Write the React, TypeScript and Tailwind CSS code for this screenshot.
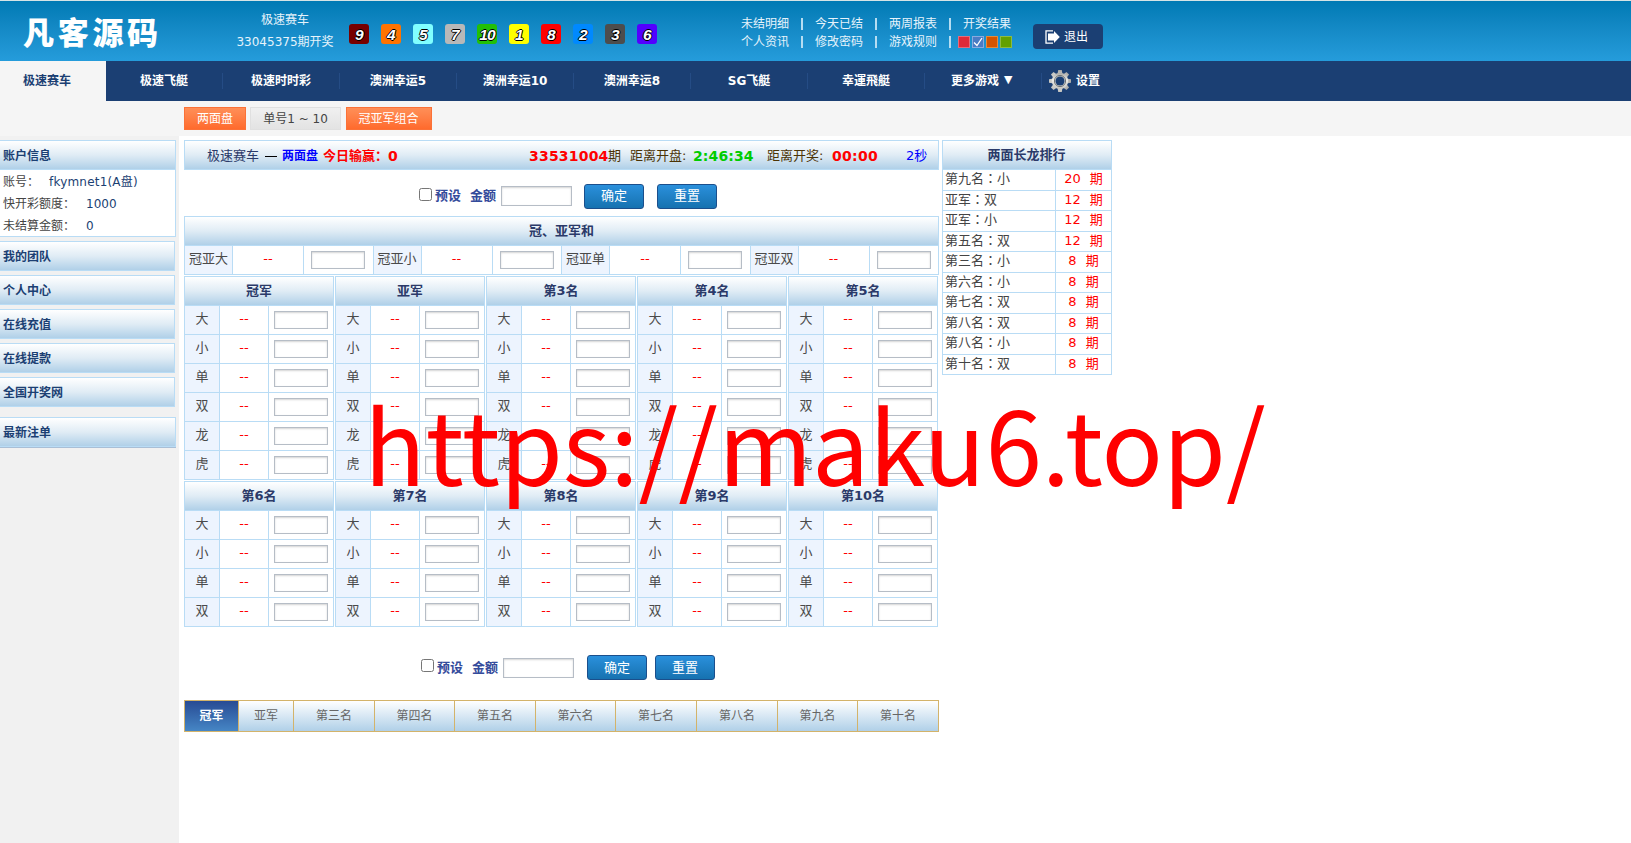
import clsx from "clsx";
import { Fragment } from "react";

const BALLS = [
  { value: 9, color: "bg-[#770000]" },
  { value: 4, color: "bg-[#ff7300]" },
  { value: 5, color: "bg-[#80ffff]" },
  { value: 7, color: "bg-[#b8b8b8]" },
  { value: 10, color: "bg-[#22c006]" },
  { value: 1, color: "bg-[#ffff00]" },
  { value: 8, color: "bg-[#ff0000]" },
  { value: 2, color: "bg-[#0089ff]" },
  { value: 3, color: "bg-[#4d4d4d]" },
  { value: 6, color: "bg-[#5200ff]" },
];

const GAMES = [
  "极速飞艇",
  "极速时时彩",
  "澳洲幸运5",
  "澳洲幸运10",
  "澳洲幸运8",
  "SG飞艇",
  "幸運飛艇",
];

const SIDE_LINKS = ["我的团队", "个人中心", "在线充值", "在线提款", "全国开奖网"];

const SIX = ["大", "小", "单", "双", "龙", "虎"];
const FOUR = ["大", "小", "单", "双"];

const STREAKS = [
  { rank: "第九名", side: "小", count: 20 },
  { rank: "亚军", side: "双", count: 12 },
  { rank: "亚军", side: "小", count: 12 },
  { rank: "第五名", side: "双", count: 12 },
  { rank: "第三名", side: "小", count: 8 },
  { rank: "第六名", side: "小", count: 8 },
  { rank: "第七名", side: "双", count: 8 },
  { rank: "第八名", side: "双", count: 8 },
  { rank: "第八名", side: "小", count: 8 },
  { rank: "第十名", side: "双", count: 8 },
];

const RESULT_TABS = [
  { label: "冠军", width: "w-[54px]" },
  { label: "亚军", width: "w-[55px]" },
  { label: "第三名", width: "w-[81px]" },
  { label: "第四名", width: "w-[80px]" },
  { label: "第五名", width: "w-[81px]" },
  { label: "第六名", width: "w-[80px]" },
  { label: "第七名", width: "w-[81px]" },
  { label: "第八名", width: "w-[81px]" },
  { label: "第九名", width: "w-[80px]" },
  { label: "第十名", width: "w-[81px]" },
];

const PANEL_HEAD =
  "border border-[#b9dcf5] bg-linear-to-b from-white via-[#e0ecf5] to-[#b0d0e8]";

function LogoutIcon() {
  return (
    <svg width="15" height="14" viewBox="0 0 15 14" className="block">
      <path d="M8 .8H1v12.4h7" fill="none" stroke="#fff" strokeWidth="1.3" />
      <path d="M3 3.5h6V1l5.8 6L9 13v-2.500H3z" fill="#fff" />
    </svg>
  );
}

function GearIcon() {
  return (
    <svg width="22" height="22" viewBox="0 0 22 22" className="block">
      <defs>
        <linearGradient id="gear" x1="0" y1="0" x2="0" y2="1">
          <stop offset="0" stopColor="#a9a9a6" />
          <stop offset="0.45" stopColor="#ecece8" />
          <stop offset="1" stopColor="#c4c4c0" />
        </linearGradient>
      </defs>
      <g fill="url(#gear)">
        {[0, 45, 90, 135].map((angle) => (
          <path
            key={angle}
            d="M9.2 0h3.6l.8 5v12l-.8 5H9.2l-.8-5V5z"
            transform={`rotate(${angle} 11 11)`}
          />
        ))}
        <circle cx="11" cy="11" r="8.2" />
      </g>
      <circle cx="11" cy="11" r="5.6" fill="none" stroke="#6f7476" strokeWidth="1" />
      <circle cx="11" cy="11" r="4.6" fill="#1b3f73" />
    </svg>
  );
}

function TopLinks({ items }: { items: string[] }) {
  return (
    <>
      {items.map((item) => (
        <Fragment key={item}>
          <a className="w-12">{item}</a>
          <span className="flex w-[26px] justify-center">
            <span className="h-3 w-[2px] bg-[#b5ddf2]" />
          </span>
        </Fragment>
      ))}
    </>
  );
}

function Header() {
  return (
    <header className="flex h-[61px] items-start border-t border-[#d5e4e6] bg-linear-to-b from-[#007ab4] to-[#259cdb] text-[12px] leading-[18px] text-[#e6f3fb]">
      <div className="ml-[23px] w-[209px] pt-[14px] text-[31px] leading-[36px] font-black tracking-[3.7px] text-white">
        凡客源码
      </div>
      <div className="w-[106px] pt-[8px] text-center leading-[22px]">
        <p>极速赛车</p>
        <p>33045375期开奖</p>
      </div>
      <div className="mt-[23px] ml-[11px] flex gap-3">
        {BALLS.map(({ value, color }) => (
          <span
            key={value}
            className={clsx(
              "flex h-5 w-5 items-center justify-center rounded-[3px] pt-px font-['Liberation_Sans'] text-[15.5px] font-bold tracking-[-0.8px] text-white italic [text-shadow:1px_0_#000,-1px_0_#000,0_1px_#000,0_-1px_#000]",
              color,
            )}
          >
            {value}
          </span>
        ))}
      </div>
      <div className="mt-[14px] ml-[84px] w-[292px]">
        <div className="flex items-center">
          <TopLinks items={["未结明细", "今天已结", "两周报表"]} />
          <a>开奖结果</a>
        </div>
        <div className="flex items-center">
          <TopLinks items={["个人资讯", "修改密码", "游戏规则"]} />
          <span className="-ml-[5px] flex gap-[2px]">
            <span className="h-3 w-3 border border-[#e56b7c] bg-[#e02a38]" />
            <span className="h-3 w-3 border border-[#8aaade] bg-[#4a7cc4]">
              <svg width="10" height="10" viewBox="0 0 10 10" className="block">
                <path d="M1 5.5 4 8.500 9 1" fill="none" stroke="#fff" strokeWidth="1.3" />
              </svg>
            </span>
            <span className="h-3 w-3 border border-[#e58a3a] bg-[#d35400]" />
            <span className="h-3 w-3 border border-[#8cbb42] bg-[#62a000]" />
          </span>
        </div>
      </div>
      <button
        type="button"
        className="mt-[23px] flex h-[25px] w-[70px] items-center gap-[4px] rounded-[4px] bg-[#1b3f73] pl-3 text-white"
      >
        <LogoutIcon />
        退出
      </button>
    </header>
  );
}

function GameNav() {
  const item =
    "flex h-4 w-[117px] items-center border-r border-[#254c85] pb-[1px] whitespace-nowrap";
  return (
    <nav className="flex h-10 items-center bg-[#1b3f73] text-[12px] font-bold text-white">
      <a className="flex h-10 w-[106px] items-center bg-[#f5f5f5] pl-[23px] text-[#1b3f73]">
        极速赛车
      </a>
      {GAMES.map((game) => (
        <a key={game} className={clsx("justify-center", item)}>
          {game}
        </a>
      ))}
      <a className={clsx("gap-[5px] pl-[26px]", item)}>
        更多游戏<span className="text-[11px]">▼</span>
      </a>
      <a className="ml-[7px] flex items-center gap-[5px]">
        <GearIcon />
        设置
      </a>
    </nav>
  );
}

function SubNav() {
  const active =
    "border border-[#fb7137] bg-linear-to-b from-[#ff8f57] to-[#ff6a2c] text-white";
  return (
    <div className="flex h-[35px] bg-[#f5f5f5] pt-[6px] pl-[184px] text-[12px] leading-[23px]">
      <a className={clsx("h-[23px] w-[62px] text-center", active)}>两面盘</a>
      <a className="ml-1 h-[23px] w-[91px] border border-[#e0e0e0] bg-linear-to-b from-[#f0f0f0] to-[#e3e3e3] text-center text-[#444]">
        单号1 ~ 10
      </a>
      <a className={clsx("ml-[5px] h-[23px] w-[86px] pr-px text-center", active)}>冠亚军组合</a>
    </div>
  );
}

function Sidebar() {
  const head = clsx("border-l-0 pl-[3px] leading-[30px] font-bold text-[#1b3f73]", PANEL_HEAD);
  return (
    <aside className="w-[179px] bg-[#f1f1f1] pt-1 text-[12px] text-[#444]">
      <div className={clsx("h-[30px] w-[176px]", head)}>账户信息</div>
      <div className="h-[67px] w-[176px] border-r border-b border-[#b9dcf5] bg-white pt-px pl-[3px] leading-[22px]">
        <p className="flex">
          <span className="w-[46px]">账号：</span>
          <span className="tracking-[0.2px] text-[#1b3f73]">fkymnet1(A盘)</span>
        </p>
        <p className="flex">
          <span className="w-[83px]">快开彩额度：</span>
          <span className="text-[#1b3f73]">1000</span>
        </p>
        <p className="flex">
          <span className="w-[83px]">未结算金额：</span>
          <span className="text-[#1b3f73]">0</span>
        </p>
      </div>
      <div className="mt-1 flex flex-col gap-1">
        {SIDE_LINKS.map((link) => (
          <a key={link} className={clsx("h-[30px] w-[175px]", head)}>
            {link}
          </a>
        ))}
      </div>
      <div className={clsx("mt-[10px] h-[30px] w-[176px] shadow-[0_1px_0_#a9bfd6]", head)}>
        最新注单
      </div>
    </aside>
  );
}

function AmountInput({ className }: { className: string }) {
  return (
    <input
      type="text"
      className={clsx(
        "block border border-[#b6bdc6] bg-white shadow-[inset_0_1px_2px_#d4d4d4] outline-none",
        className,
      )}
    />
  );
}

function ActionButton({ label, className }: { label: string; className: string }) {
  return (
    <button
      type="button"
      className={clsx(
        "h-[25px] w-[60px] rounded-[3px] border border-[#1b4f8c] bg-linear-to-b from-[#2a90dc] to-[#1672b0] text-[13px] leading-[22px] text-white",
        className,
      )}
    >
      {label}
    </button>
  );
}

function PresetBar({ className, first, second }: { className: string; first: string; second: string }) {
  return (
    <div className={clsx("flex items-center text-[13px] leading-[20px] font-bold text-[#344b9b]", className)}>
      <input type="checkbox" className="mb-[4px] h-[13px] w-[13px]" />
      <span className="ml-[3px] w-[35px]">预设</span>
      <span className="w-[31px]">金额</span>
      <AmountInput className="h-5 w-[71px]" />
      <ActionButton label="确定" className={clsx("font-normal", first)} />
      <ActionButton label="重置" className={clsx("font-normal", second)} />
    </div>
  );
}

function StatusBar() {
  return (
    <div className={clsx("flex h-[30px] items-center pt-[2px] pl-[22px] text-[13px] whitespace-nowrap", PANEL_HEAD)}>
      <span className="w-[58px] text-[#2b3a69]">极速赛车</span>
      <span className="w-[17px]">
        <span className="block h-px w-3 bg-black" />
      </span>
      <b className="w-[41px] text-[12px] text-[#00f]">两面盘</b>
      <b className="w-[65px] text-[#f00]">今日输赢：</b>
      <b className="w-[141px] text-[14px] text-[#f00]">0</b>
      <b className="w-[79px] text-[14px] tracking-[0.2px] text-[#f00]">33531004</b>
      <span className="w-[22px] text-[#4b3305]">期</span>
      <span className="w-[63px] text-[#4b3305]">距离开盘:</span>
      <b className="w-[74px] text-[14px] tracking-[0.1px] text-[#0c0]">2:46:34</b>
      <span className="w-[65px] text-[#4b3305]">距离开奖:</span>
      <b className="w-[74px] text-[14px] tracking-[0.3px] text-[#f00]">00:00</b>
      <span className="text-[#00f]">2秒</span>
    </div>
  );
}

function SumTable() {
  return (
    <div>
      <div className={clsx("h-[30px] text-center text-[13px] leading-[28px] font-bold text-[#2b3a69]", PANEL_HEAD)}>
        冠、亚军和
      </div>
      <div className="grid h-[29px] grid-cols-4 border-r border-b border-[#b9dcf5] text-[13px]">
        {["冠亚大", "冠亚小", "冠亚单", "冠亚双"].map((label) => (
          <div key={label} className="flex border-l border-[#b9dcf5] leading-[26px]">
            <span className="w-[47px] bg-[#edf4fe] text-center text-[#4a4a4a]">{label}</span>
            <span className="w-[72px] border-x border-[#b9dcf5] text-center text-[#f00]">--</span>
            <span className="flex flex-1 items-center justify-center">
              <AmountInput className="h-[18px] w-[54px]" />
            </span>
          </div>
        ))}
      </div>
    </div>
  );
}

function RankTable({ title, rows }: { title: string; rows: string[] }) {
  return (
    <div className="w-[150px]">
      <div className={clsx("h-[30px] text-center text-[13px] leading-[28px] font-bold text-[#2b3a69]", PANEL_HEAD)}>
        {title}
      </div>
      {rows.map((row) => (
        <div
          key={row}
          className="flex h-[29px] border-x border-b border-[#b9dcf5] text-[13px] leading-[26px]"
        >
          <span className="w-[34px] bg-[#edf4fe] text-center text-[#4a4a4a]">{row}</span>
          <span className="w-[50px] border-x border-[#b9dcf5] text-center text-[#f00]">--</span>
          <span className="flex flex-1 items-center justify-center">
            <AmountInput className="h-[18px] w-[54px]" />
          </span>
        </div>
      ))}
    </div>
  );
}

function ResultTabs() {
  return (
    <div className="mt-5 flex h-8 w-[755px] border border-r-0 border-[#d3b36a] text-[12px] leading-[31px]">
      {RESULT_TABS.map(({ label, width }, index) => (
        <a
          key={label}
          className={clsx(
            "border-r border-[#d3b36a] bg-linear-to-b text-center",
            width,
            index === 0
              ? "from-[#284b94] to-[#4686c5] font-bold text-white"
              : "from-white to-[#b0d0e8] text-[#666]",
          )}
        >
          {label}
        </a>
      ))}
    </div>
  );
}

function StreakTable() {
  return (
    <div className="ml-[3px] w-[170px] text-[13px]">
      <div className={clsx("h-[30px] pr-px text-center leading-[28px] font-bold text-[#2b3a69]", PANEL_HEAD)}>
        两面长龙排行
      </div>
      {STREAKS.map(({ rank, side, count }, index) => (
        <div
          key={rank + side}
          className={clsx(
            "flex border-x border-b border-[#b9dcf5] leading-[18px]",
            index % 2 === 0 ? "h-[21px]" : "h-5",
          )}
        >
          <span className="w-[113px] border-r border-[#b9dcf5] pl-[2px] text-[#444]">
            {rank}
            <span lang="zh-TW" className="font-['Noto_Sans_CJK_TC'] leading-none">
              ：
            </span>
            {side}
          </span>
          <span className="flex flex-1 justify-center gap-[9px] text-[#f00]">
            <span>{count}</span>
            <span>期</span>
          </span>
        </div>
      ))}
    </div>
  );
}

export default function App() {
  return (
    <div
      lang="zh-CN"
      className="relative flex h-[843px] w-[1631px] flex-col overflow-hidden bg-white font-['DejaVu_Sans','Noto_Sans_CJK_SC',sans-serif]"
    >
      <Header />
      <GameNav />
      <SubNav />
      <div className="flex flex-1">
        <Sidebar />
        <main className="ml-[5px] w-[755px] pt-1">
          <StatusBar />
          <PresetBar className="h-[46px] pt-[6px] pl-[235px]" first="ml-[12px]" second="ml-[13px]" />
          <SumTable />
          <div className="mt-px flex gap-px">
            {["冠军", "亚军", "第3名", "第4名", "第5名"].map((title) => (
              <RankTable key={title} title={title} rows={SIX} />
            ))}
          </div>
          <div className="mt-px flex gap-px">
            {["第6名", "第7名", "第8名", "第9名", "第10名"].map((title) => (
              <RankTable key={title} title={title} rows={FOUR} />
            ))}
          </div>
          <PresetBar className="mt-[28px] h-[25px] pl-[237px]" first="ml-[13px]" second="ml-[8px]" />
          <ResultTabs />
        </main>
        <div className="pt-1">
          <StreakTable />
        </div>
      </div>
      <div className="pointer-events-none absolute top-[367px] left-[364px] font-['Noto_Sans_CJK_SC'] text-[101.500px] leading-[150px] whitespace-nowrap text-[#f00]">
        https://maku6.top/
      </div>
    </div>
  );
}
